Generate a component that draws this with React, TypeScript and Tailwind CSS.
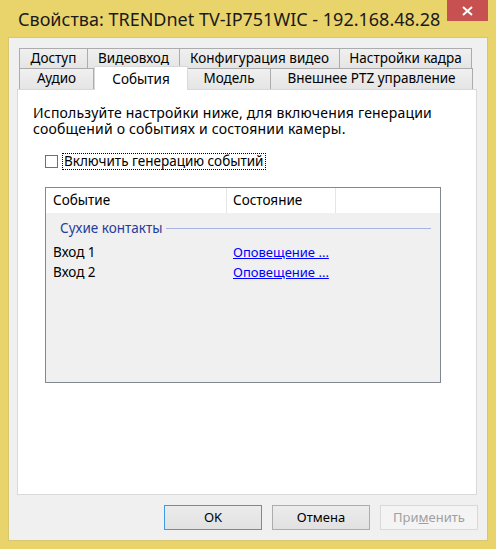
import React from "react";

const font = { fontFamily: '"Noto Sans", "Open Sans", sans-serif' };

type Tab = { label: string; width: string; selected?: boolean };

const topRow: Tab[] = [
  { label: "Доступ", width: "w-[69px]" },
  { label: "Видеовход", width: "w-[93px]" },
  { label: "Конфигурация видео", width: "w-[161px]" },
  { label: "Настройки кадра", width: "w-[133px]" },
];

const bottomRow: Tab[] = [
  { label: "Аудио", width: "w-[75px]" },
  { label: "События", width: "w-[94px]", selected: true },
  { label: "Модель", width: "w-[84px]" },
  { label: "Внешнее PTZ управление", width: "w-[203px]" },
];

function TabButton({ tab, tall }: { tab: Tab; tall?: boolean }) {
  if (tab.selected) {
    return (
      <div
        className={`${tab.width} relative z-10 -mt-[2px] flex h-[24px] shrink-0 items-start justify-center border border-b-0 border-[#d9d9d9] bg-white pt-[2px] text-[13.5px] text-black`}
      >
        {tab.label}
      </div>
    );
  }
  return (
    <div
      className={`${tab.width} ${tall ? "h-[22px] pb-[1px]" : "h-[21px]"} -ml-[1px] flex shrink-0 items-center justify-center border border-[#acacac] bg-gradient-to-b from-[#f0f0f0] to-[#e5e5e5] text-[13.5px] text-black first:ml-0`}
    >
      {tab.label}
    </div>
  );
}

const rows = [
  { name: "Вход 1", state: "Оповещение ..." },
  { name: "Вход 2", state: "Оповещение ..." },
];

export default function App() {
  return (
    <div
      className="flex h-[549px] w-[496px] flex-col bg-[#e9d46c]"
      style={font}
    >
      {/* title bar */}
      <div className="flex h-[37px] shrink-0 items-start justify-between">
        <div className="pl-[18px] pt-[7px] text-[18px] leading-[24px] text-[#1a1a1a]">
          Свойства: TRENDnet TV-IP751WIC - 192.168.48.28
        </div>
        <div className="mr-[8px] flex h-[21px] w-[41px] items-center justify-center bg-[#c75050]">
          <svg width="11" height="10" viewBox="0 0 11 10">
            <path
              d="M1 1 L10 9 M10 1 L1 9"
              stroke="white"
              strokeWidth="2"
            />
          </svg>
        </div>
      </div>

      {/* client area */}
      <div className="mx-[8px] mb-[8px] flex flex-1 flex-col border border-[#d8c670] bg-[#f0f0f0] px-[8px] pt-[10px]">
        <div className="mx-[2px] flex flex-col">
          <div className="flex">
            {topRow.map((t) => (
              <TabButton key={t.label} tab={t} />
            ))}
          </div>
          <div className="-mt-[1px] flex">
            {bottomRow.map((t) => (
              <TabButton key={t.label} tab={t} tall />
            ))}
          </div>
        </div>

        {/* tab page */}
        <div className="-mt-[1px] flex h-[406px] w-[460px] flex-col border border-[#d9d9d9] bg-white px-[15px] pt-[15px] text-[13.5px] text-black">
          <div className="flex flex-col text-[14px] leading-[16px] tracking-[0.2px]">
            <span>Используйте настройки ниже, для включения генерации</span>
            <span>сообщений о событиях и состоянии камеры.</span>
          </div>

          <label className="mt-[16px] ml-[12px] flex items-center">
            <span className="h-[13px] w-[13px] border border-[#707070] bg-white" />
            <span className="ml-[4px] border border-dotted border-black px-[1px] leading-[15px]">
              Включить генерацию событий
            </span>
          </label>

          {/* list view */}
          <div className="mt-[17px] ml-[12px] flex h-[196px] w-[396px] flex-col border border-[#828790] bg-[#f0f0f0]">
            <div className="flex h-[25px] bg-white">
              <div className="flex w-[181px] items-center border-r border-[#e5e5e5] pl-[7px]">
                Событие
              </div>
              <div className="flex w-[109px] items-center border-r border-[#e5e5e5] pl-[6px]">
                Состояние
              </div>
            </div>
            <div className="mt-[5px] flex items-center pl-[14px] pr-[9px]">
              <span className="text-[#263c9a]">Сухие контакты</span>
              <span className="ml-[4px] h-px flex-1 bg-[#a8b4e2]" />
            </div>
            {rows.map((r, i) => (
              <div
                key={r.name}
                className={`${i === 0 ? "mt-[6px]" : "mt-[4px]"} flex h-[16px] items-center`}
              >
                <div className="w-[181px] pl-[7px]">{r.name}</div>
                <div className="pl-[6px] text-[13px] text-[#0000ff] underline">
                  {r.state}
                </div>
              </div>
            ))}
          </div>
        </div>

        {/* buttons */}
        <div className="mt-[10px] flex justify-end gap-[10px] pr-[1px] text-[13px]">
          <button className="h-[25px] w-[98px] border border-[#3c9ae8] bg-gradient-to-b from-[#ececec] to-[#e1e1e1] text-black">
            OK
          </button>
          <button className="h-[25px] w-[98px] border border-[#acacac] bg-gradient-to-b from-[#ececec] to-[#e1e1e1] text-black">
            Отмена
          </button>
          <button className="h-[25px] w-[98px] border border-[#d9d9d9] bg-[#f4f4f4] text-[#a0a0a0]">
            При<span className="underline">м</span>енить
          </button>
        </div>
      </div>
    </div>
  );
}
